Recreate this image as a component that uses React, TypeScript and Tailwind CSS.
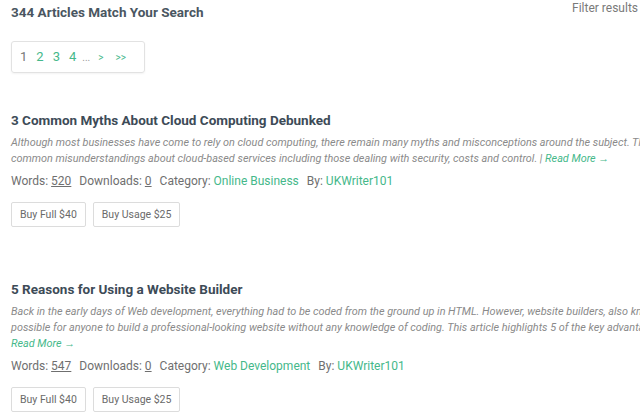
import { ReactNode } from 'react';

interface Article {
    title: string;
    lines: ReactNode[];
    words: number;
    downloads: number;
    category: string;
    author: string;
}

const readMore = <a className="text-[#45b88a]">Read More →</a>;

const articles: Article[] = [
    {
        title: '3 Common Myths About Cloud Computing Debunked',
        lines: [
            'Although most businesses have come to rely on cloud computing, there remain many myths and misconceptions around the subject. This article looks at some of the most',
            <>common misunderstandings about cloud-based services including those dealing with security, costs and control. | {readMore}</>,
        ],
        words: 520,
        downloads: 0,
        category: 'Online Business',
        author: 'UKWriter101',
    },
    {
        title: '5 Reasons for Using a Website Builder',
        lines: [
            'Back in the early days of Web development, everything had to be coded from the ground up in HTML. However, website builders, also known as site builders, have made it',
            'possible for anyone to build a professional-looking website without any knowledge of coding. This article highlights 5 of the key advantages of using one. |',
            readMore,
        ],
        words: 547,
        downloads: 0,
        category: 'Web Development',
        author: 'UKWriter101',
    },
];

function ArticleItem({ article }: { article: Article }) {
    return (
        <div>
            <h3 className="text-[13.5px] font-bold text-[#3d4b57] leading-5">{article.title}</h3>
            <p className="mt-[5px] text-[10.85px] italic text-[#8a8a8a] leading-4 whitespace-nowrap">
                {article.lines.map((line, i) => (
                    <span key={i} className="block">{line}</span>
                ))}
            </p>
            <div className="mt-[4px] text-[12px] text-[#6f6f6f] leading-5 flex gap-[8px] whitespace-nowrap">
                <span>Words: <u>{article.words}</u></span>
                <span>Downloads: <u>{article.downloads}</u></span>
                <span>Category: <a className="text-[#45b88a]">{article.category}</a></span>
                <span>By: <a className="text-[#45b88a]">{article.author}</a></span>
            </div>
            <div className="mt-[11px] flex gap-[7px]">
                <button className="h-[25px] px-[8px] border border-[#dcdcdc] rounded-[2px] text-[10.5px] text-[#6a6a6a] bg-white">Buy Full $40</button>
                <button className="h-[25px] px-[8px] border border-[#dcdcdc] rounded-[2px] text-[10.5px] text-[#6a6a6a] bg-white">Buy Usage $25</button>
            </div>
        </div>
    );
}

export default function App() {
    const pages = ['2', '3', '4'];
    return (
        <div className="w-[640px] h-[415px] overflow-hidden bg-white font-['Roboto',sans-serif]">
            <div className="flex justify-between items-start">
                <h2 className="ml-[11px] mt-[2px] text-[13.5px] font-bold text-[#4a5661] leading-5">344 Articles Match Your Search</h2>
                <span className="mr-[2px] mt-0 text-[12px] text-[#7a7a7a] leading-4">Filter results</span>
            </div>
            <div className="ml-[11px] mt-[19px] w-[134px] h-[32px] border border-[#e2e2e2] rounded-[3px] shadow-[0_1px_2px_rgba(0,0,0,0.05)] flex items-center pl-[8px] text-[13px]">
                <span className="text-[#777]">1</span>
                {pages.map(p => (
                    <a key={p} className="text-[#45b88a] ml-[9px]">{p}</a>
                ))}
                <span className="text-[#999] text-[10px] ml-[6px]">...</span>
                <a className="text-[#45b88a] text-[10px] ml-[8px]">&gt;</a>
                <a className="text-[#45b88a] text-[10px] ml-[12px]">&gt;&gt;</a>
            </div>
            <div className="ml-[11px] mt-[37px] flex flex-col gap-[52px]">
                {articles.map(a => (
                    <ArticleItem key={a.title} article={a} />
                ))}
            </div>
        </div>
    );
}
